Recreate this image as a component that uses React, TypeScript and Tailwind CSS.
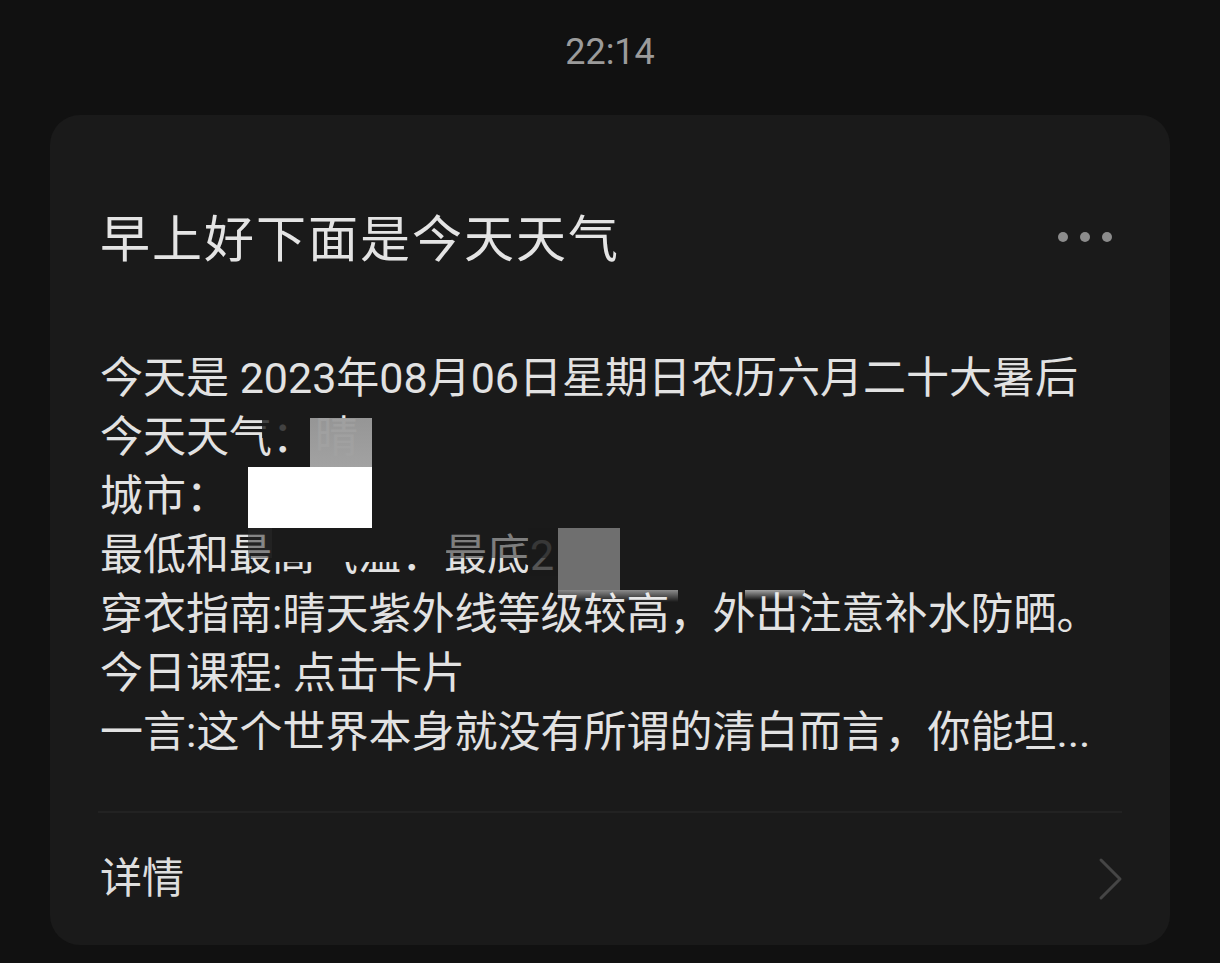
export default function App() {
  const lines = [
    "今天是 2023年08月06日星期日农历六月二十大暑后",
    "今天天气：晴",
    "城市：",
    "最低和最高气温：最底2",
    "穿衣指南:晴天紫外线等级较高，外出注意补水防晒。",
    "今日课程: 点击卡片",
    "一言:这个世界本身就没有所谓的清白而言，你能坦...",
  ];

  return (
    <div className="min-h-[963px] bg-[#111111] font-['Roboto','Noto_Sans_CJK_SC',sans-serif] pb-[18px]">
      {/* Status time */}
      <div className="h-[115px] flex justify-center pt-[30px]">
        <span className="text-[36px] leading-[44px] text-[#9b9b9b]">22:14</span>
      </div>

      {/* Card */}
      <div className="relative mx-[50px] h-[830px] rounded-[30px] bg-[#1a1a1a] flex flex-col">
        <div className="flex items-center justify-between pl-[50px] pr-[58px] pt-[95px]">
          <h1 className="text-[50px] leading-[60px] tracking-[2px] text-[#e4e4e4]">早上好下面是今天天气</h1>
          <div className="flex items-center gap-[12px] mb-[6px]">
            <span className="w-[10px] h-[10px] rounded-full bg-[#8c8c8c]" />
            <span className="w-[10px] h-[10px] rounded-full bg-[#8c8c8c]" />
            <span className="w-[10px] h-[10px] rounded-full bg-[#8c8c8c]" />
          </div>
        </div>

        <div className="pl-[50px] pt-[79px] text-[43px] leading-[59px] text-[#e2e2e2]">
          {lines.map((l) => (
            <div key={l} className="whitespace-nowrap">
              {l}
            </div>
          ))}
        </div>

        <div className="mx-[48px] mt-[49px] h-[2px] bg-[#222222]" />

        <div className="flex-1 flex items-center justify-between pl-[50px] pr-[46px]">
          <span className="text-[42px] leading-[50px] text-[#dedede]">详情</span>
          <svg width="26" height="44" viewBox="0 0 26 44" fill="none">
            <path d="M3 3 L22 22 L3 41" stroke="#454545" strokeWidth="3" strokeLinecap="round" strokeLinejoin="round" />
          </svg>
        </div>

        {/* redaction marks */}
        <div className="absolute left-[212px] top-[305px] w-[48px] h-[18px] bg-[#1a1a1a]/80" />
        <div className="absolute left-[260px] top-[303px] w-[62px] h-[49px] bg-gradient-to-b from-[#9c9c9c]/95 to-[#a2a2a2]" />
        <div className="absolute left-[198px] top-[352px] w-[124px] h-[61px] bg-white" />
        <div className="absolute left-[198px] top-[413px] w-[60px] h-[30px] bg-[#2a2a2a]/50" />
        <div className="absolute left-[222px] top-[413px] w-[174px] h-[34px] bg-[#1a1a1a]" />
        <div className="absolute left-[396px] top-[413px] w-[110px] h-[30px] bg-[#1a1a1a]/50" />
        <div className="absolute left-[478px] top-[413px] w-[30px] h-[48px] bg-[#1a1a1a]/70" />
        <div className="absolute left-[508px] top-[413px] w-[62px] h-[62px] bg-[#6f6f6f]" />
        <div className="absolute left-[508px] top-[475px] w-[120px] h-[12px] bg-gradient-to-b from-white/50 to-transparent" />
        <div className="absolute left-[695px] top-[475px] w-[60px] h-[10px] bg-gradient-to-b from-white/60 to-transparent" />
      </div>
    </div>
  );
}
